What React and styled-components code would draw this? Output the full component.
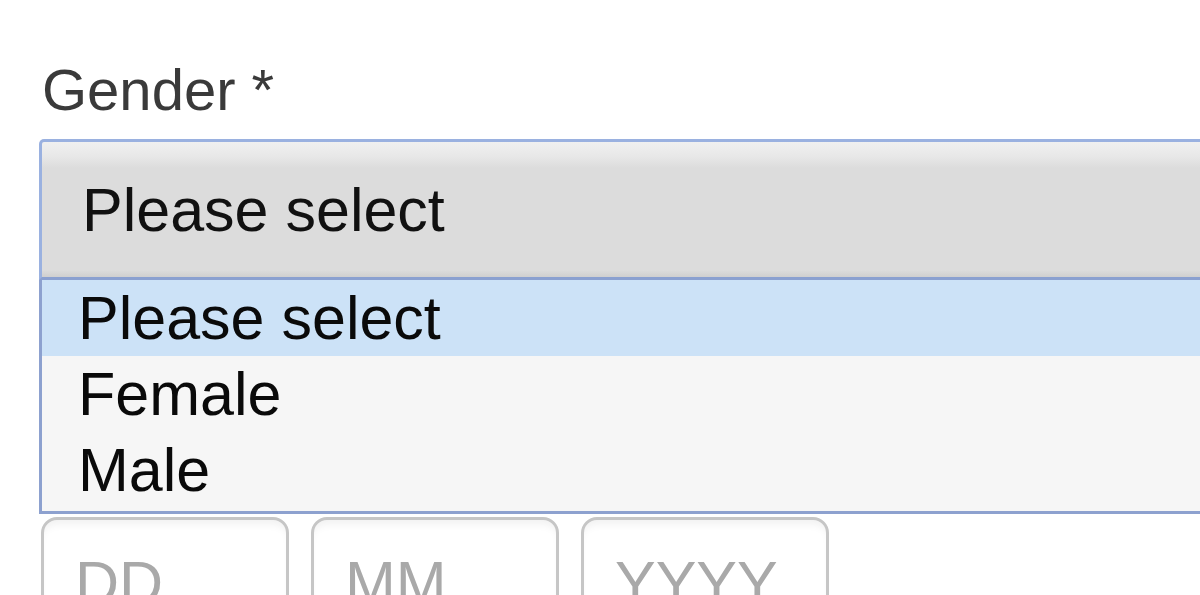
import React from "react";
import styled, { createGlobalStyle } from "styled-components";

const GlobalStyle = createGlobalStyle`
  html, body {
    margin: 0;
    padding: 0;
    background: #fff;
    overflow: hidden;
  }
  body {
    font-family: "Liberation Sans", Arial, sans-serif;
  }
`;

const Page = styled.div`
  width: 1200px;
  height: 595px;
  overflow: hidden;
  padding: 57px 0 0 39px;
  box-sizing: border-box;
`;

const Field = styled.div`
  width: 1300px;
  display: flex;
  flex-direction: column;
`;

const Label = styled.label`
  font-size: 58px;
  line-height: 65px;
  color: #3a3a3a;
  margin-left: 3px;
  margin-bottom: 17px;
`;

const SelectBox = styled.div`
  height: 141px;
  box-sizing: border-box;
  border: 3px solid #9ab1e0;
  border-bottom: 3px solid #8aa0d0;
  border-radius: 5px 5px 0 0;
  background: linear-gradient(#f0f0f0 0, #e8e8e8 14px, #dcdcdc 26px, #dcdcdc 128px, #cfcfcf 135px);
  display: flex;
  align-items: center;
  padding-left: 40px;
  font-size: 61px;
  color: #111;
`;

const List = styled.ul`
  list-style: none;
  margin: 0;
  padding: 0 0 2px;
  border: 3px solid #8da1cf;
  border-top: none;
  background: #f6f6f6;
`;

const Option = styled.li`
  height: ${(p) => (p.$h ? p.$h : 76)}px;
  line-height: ${(p) => (p.$h ? p.$h : 76)}px;
  padding-left: 36px;
  font-size: 61px;
  color: #0a0a0a;
  background: ${(p) => (p.$active ? "#cce2f7" : "transparent")};
`;

const DateRow = styled.div`
  display: flex;
  gap: 22px;
  margin-top: 3px;
  margin-left: 2px;
`;

const DateInput = styled.div`
  width: 248px;
  height: 110px;
  box-sizing: border-box;
  border: 3px solid #c6c6c6;
  border-radius: 16px;
  box-shadow: inset 0 8px 8px -4px rgba(0, 0, 0, 0.06);
  background: #fff;
  padding: 28px 0 0 31px;
  font-size: 61px;
  line-height: 70px;
  color: #a9a9a9;
`;

export default function App() {
  return (
    <Page>
      <GlobalStyle />
      <Field>
        <Label>Gender *</Label>
        <SelectBox>Please select</SelectBox>
        <List>
          <Option $active>Please select</Option>
          <Option $h={76}>Female</Option>
          <Option $h={77}>Male</Option>
        </List>
        <DateRow>
          <DateInput>DD</DateInput>
          <DateInput>MM</DateInput>
          <DateInput>YYYY</DateInput>
        </DateRow>
      </Field>
    </Page>
  );
}
